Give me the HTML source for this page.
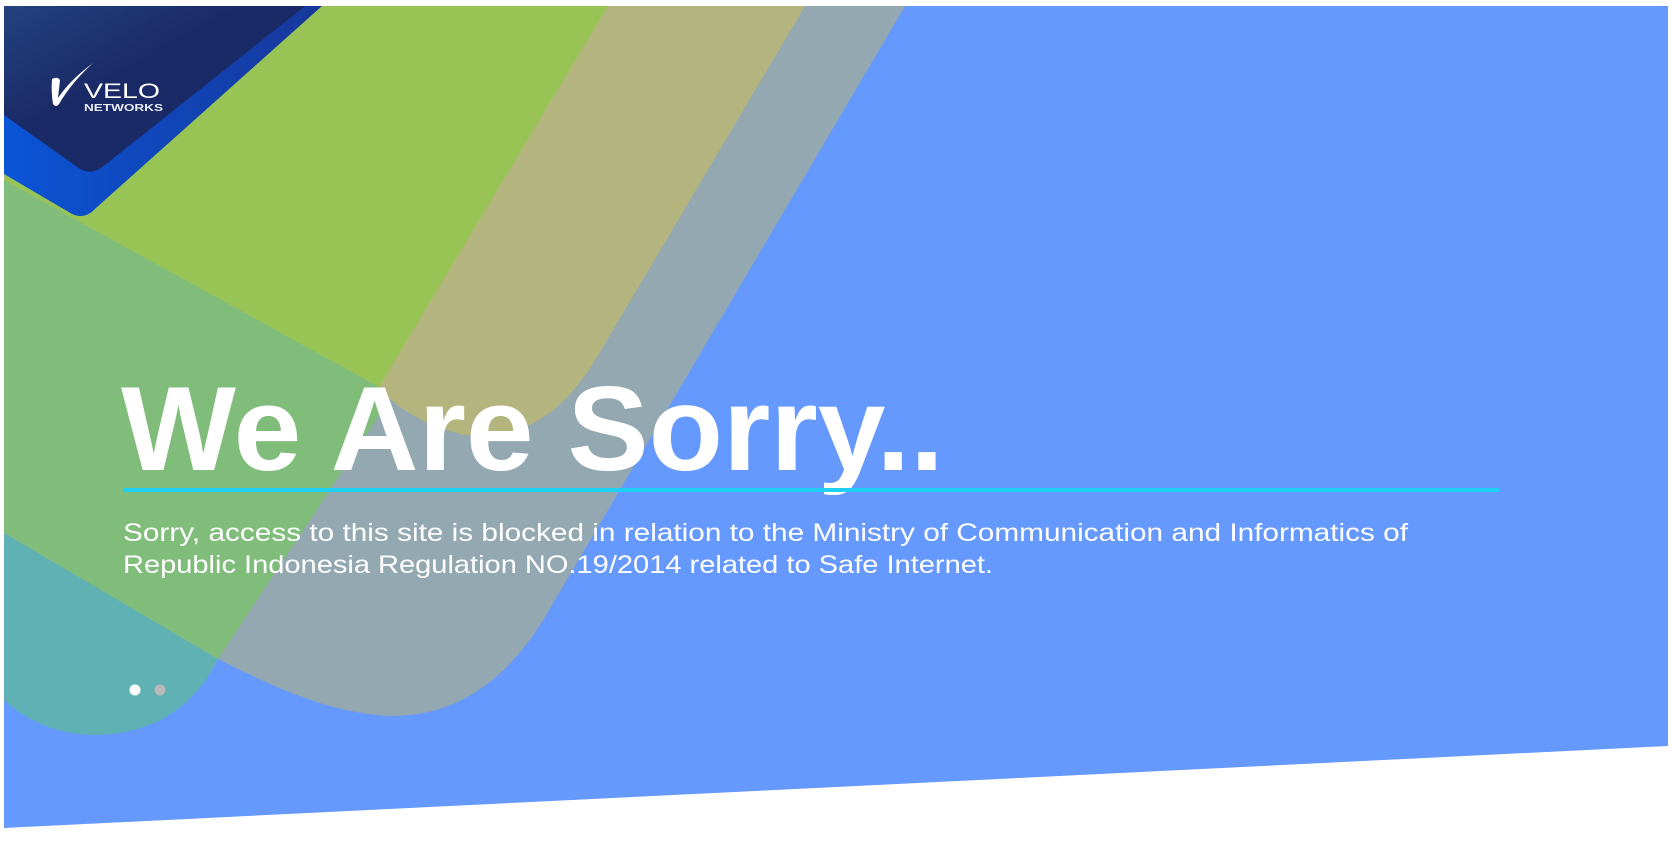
<!DOCTYPE html>
<html><head><meta charset="utf-8"><style>
html,body{margin:0;padding:0;background:#fff;width:1672px;height:856px;overflow:hidden}
svg{display:block}
</style></head><body>
<svg width="1672" height="856" viewBox="0 0 1672 856" xmlns="http://www.w3.org/2000/svg">
<defs>
<linearGradient id="bb" x1="0" y1="0" x2="1" y2="0"><stop offset="0" stop-color="#0a55d8"/><stop offset="1" stop-color="#17379a"/></linearGradient>
<linearGradient id="nv" x1="0" y1="0" x2="1" y2="1"><stop offset="0" stop-color="#23427f"/><stop offset="0.4" stop-color="#1a2a66"/><stop offset="1" stop-color="#1a2a66"/></linearGradient>
</defs>
<polygon points="4,6 1668,6 1668,746 4,828" fill="#6699fe"/>
<path d="M805,6 L905,6 L545,617 C495,700 430,725 362,713 C310,705 260,680 218,659 L4,540 L4,170 Z" fill="#93a8b1"/>
<path d="M608,6 L805,6 L597,357 Q545,445 465,435 Q420,425 390,399 L4,180 L4,170 Z" fill="#b4b47e"/>
<path d="M304,6 L608,6 L379,387 L6,181 L4,170 Z" fill="#98c455"/>
<path d="M4,180 L379,387 L390,399 L218,659 L4,533 Z" fill="#80bd7b"/>
<path d="M4,533 L218,659 Q180,735 92,735 Q40,733 4,700 Z" fill="#60b1b4"/>
<path d="M4,6 L322,6 L96,208 Q85,220 72,214 L4,174 Z" fill="url(#bb)"/>
<path d="M4,6 L305,6 L105,165 Q92,176 80,169 L4,115 Z" fill="url(#nv)"/>
<path d="M52,79 Q57,76 60,80 L58,98 Q70,80 93,63 Q72,82 59,104 Q56,108 53,104 Q51,92 52,79 Z" fill="#fff"/>
<text x="84" y="98" font-family="Liberation Sans, sans-serif" font-size="21" fill="#fff" textLength="76" lengthAdjust="spacingAndGlyphs">VELO</text>
<text x="84" y="111" font-family="Liberation Sans, sans-serif" font-weight="bold" font-size="10" fill="#e8ecf5" textLength="79" lengthAdjust="spacingAndGlyphs">NETWORKS</text>
<text x="121" y="470" font-family="Liberation Sans, sans-serif" font-weight="bold" font-size="120" fill="#fff" textLength="823" lengthAdjust="spacingAndGlyphs">We Are Sorry..</text>
<rect x="123" y="488" width="1376" height="4" fill="#1fd0f5"/>
<text x="123" y="541" font-family="Liberation Sans, sans-serif" font-size="25" fill="#fff" textLength="1285" lengthAdjust="spacingAndGlyphs">Sorry, access to this site is blocked in relation to the Ministry of Communication and Informatics of</text>
<text x="123" y="573" font-family="Liberation Sans, sans-serif" font-size="25" fill="#fff" textLength="870" lengthAdjust="spacingAndGlyphs">Republic Indonesia Regulation NO.19/2014 related to Safe Internet.</text>
<circle cx="135" cy="690" r="5.5" fill="#fff"/>
<circle cx="160" cy="690" r="5.5" fill="#b9b9b9"/>
</svg>
</body></html>
